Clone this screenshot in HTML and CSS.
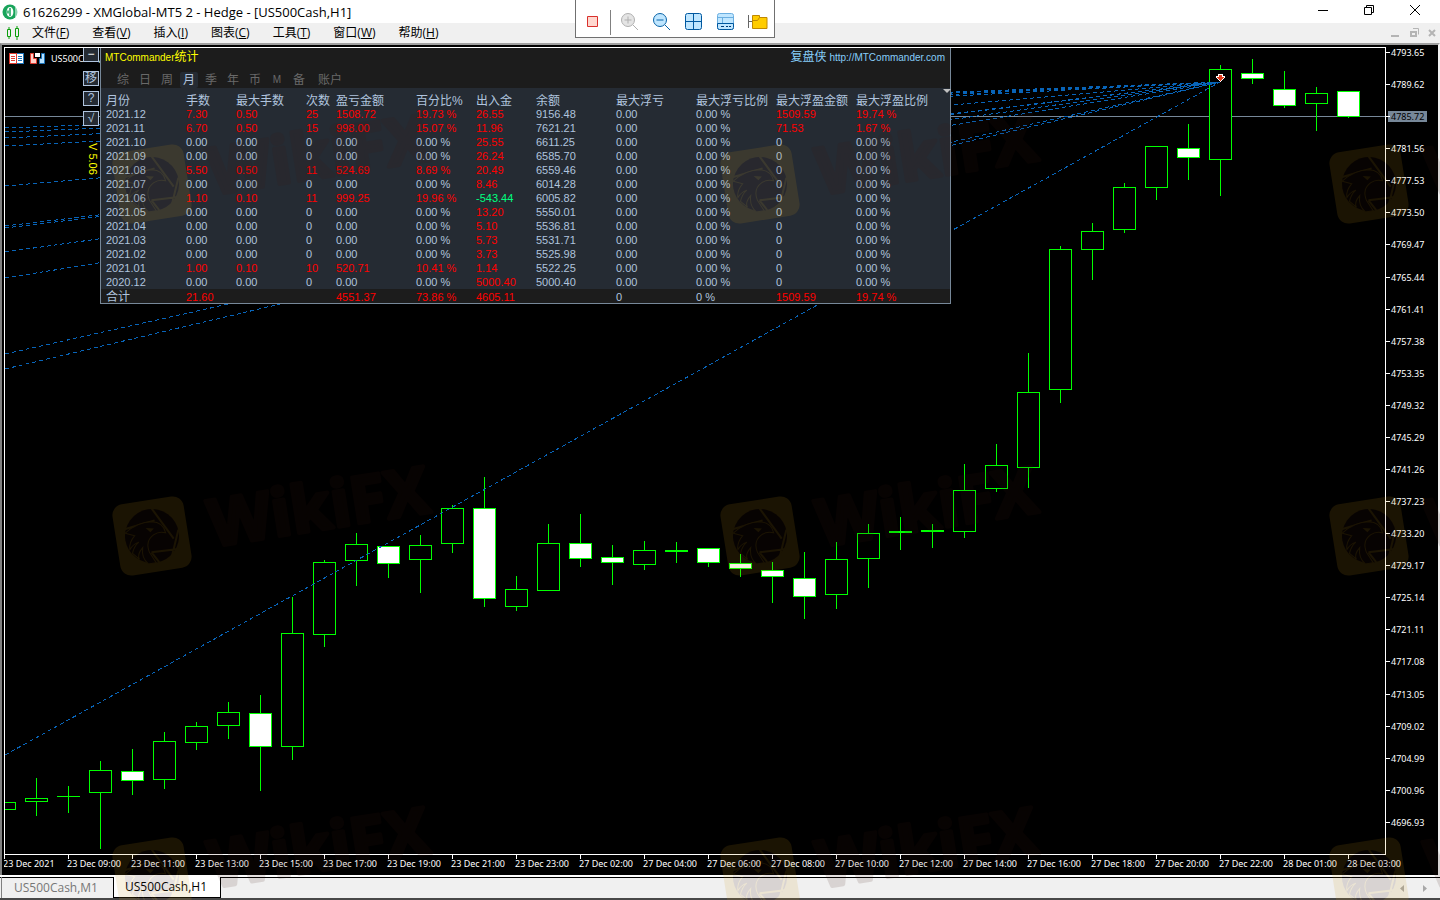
FILE: index.html
```html
<!DOCTYPE html>
<html lang="zh-CN">
<head>
	<meta charset="utf-8">
	<title>61626299 - XMGlobal-MT5 2 - Hedge - [US500Cash,H1]</title>
	<link rel="stylesheet" href="styles.css">
</head>
<body>
	<header class="titlebar">
		<svg class="titlebar__logo" width="16" height="16" viewBox="0 0 16 16">
			<circle cx="8" cy="8" r="7.5" fill="#19a45b"/>
			<path d="M13 3h3v10h-3z" fill="#fff" opacity=".5"/>
			<ellipse cx="8" cy="8" rx="3.4" ry="5" fill="#fff"/>
			<path d="M8 4v8M6 6.500v3" stroke="#19a45b" stroke-width="1.500"/>
		</svg>
		<h1 class="titlebar__text">61626299 - XMGlobal-MT5 2 - Hedge - [US500Cash,H1]</h1>
		<div class="titlebar__controls">
			<button aria-label="Minimize"><svg width="12" height="12"><path d="M1 6.500h10" stroke="#000"/></svg></button>
			<button aria-label="Restore"><svg width="12" height="12"><path d="M1.500 3.500h7v7h-7zM3.500 3.500v-2h7v7h-2" fill="none" stroke="#000"/></svg></button>
			<button aria-label="Close"><svg width="12" height="12"><path d="M1 1l10 10M11 1L1 11" stroke="#000"/></svg></button>
		</div>
	</header>

	<nav class="menubar">
		<svg width="14" height="16" fill="none" stroke="#0a9e0a">
			<path d="M1.500 4.500h3v7h-3zM3 2v2M3 12v2M9.500 3.500h3v8h-3zM11 1v2M11 12v3"/>
		</svg>
		<button>文件(<u>F</u>)</button>
		<button>查看(<u>V</u>)</button>
		<button>插入(<u>I</u>)</button>
		<button>图表(<u>C</u>)</button>
		<button>工具(<u>T</u>)</button>
		<button>窗口(<u>W</u>)</button>
		<button>帮助(<u>H</u>)</button>
		<div class="menubar__controls">
			<svg width="48" height="12" fill="none" stroke="#b4b4b4" stroke-width="2">
				<path d="M1 9h8"/>
				<path d="M21 5h5v4h-5z"/><path d="M23 1.500h5.500v6" stroke-width="1"/>
				<path d="M39 3l6 6M45 3l-6 6"/>
			</svg>
		</div>
	</nav>

	<div class="toolbar">
		<button aria-label="Stop"><svg width="20" height="20"><path d="M4.500 4.500h10v10h-10z" fill="#ffd8d0" stroke="#d9302c"/></svg></button>
		<span class="toolbar__line"></span>
		<button aria-label="Zoom in" disabled>
			<svg width="20" height="20" fill="#e4e4e4" stroke="#b0b0b0"><circle cx="8" cy="8" r="6.500"/><path d="M8 4.500v7M4.500 8h7M13 13l5 5"/></svg>
		</button>
		<button aria-label="Zoom out">
			<svg width="20" height="20" fill="#bfe6ff" stroke="#0a64a8"><circle cx="8" cy="8" r="6.500"/><path d="M4.500 8h7M13 13l5 5"/></svg>
		</button>
		<button aria-label="Tile windows">
			<svg width="20" height="20" fill="#bfe6ff" stroke="#0058a0"><rect x="1.500" y="1.500" width="16" height="16" rx="2"/><path d="M9.500 1v17M1 9.500h17"/></svg>
		</button>
		<button aria-label="Layout">
			<svg width="20" height="20" fill="#bfe6ff" stroke="#6aaee0"><rect x="1.500" y="1.500" width="16" height="16" rx="2"/><path d="M1 5.500h16M6.500 6v5"/><path d="M1.500 11.500h16v4q0 2-2 2h-12q-2 0-2-2z" stroke="#0058a0"/><path d="M5 14.500h3M10 14.500h2M13 14.500h2" stroke="#003c78"/></svg>
		</button>
		<button aria-label="Folder">
			<svg width="20" height="20"><path d="M.5 3v13M1 9.500h3" stroke="#666"/><path d="M4.500 3.500h7v2h7.500v11h-14.500z" fill="#ffcc00" stroke="#c08800"/><path d="M4.500 8.500h5l2-3" fill="none" stroke="#c08800"/></svg>
		</button>
	</div>

	<main class="chart">
		<section class="plot">
			<svg class="plot__canvas" id="canvas"></svg>

			<div class="symbol">
				<svg width="15" height="11"><path d="M0 0h8v11H0z" fill="#e03c32"/><path d="M8 0h7v11H8z" fill="#1a72b8"/><path d="M1 1h6v9H1zM8 1h6v9H8z" fill="#fff"/><path d="M2 3.500h4M2 5.500h4M2 7.500h4" stroke="#e03c32"/><path d="M9 3.500h4M9 5.500h4M9 7.500h4" stroke="#1a72b8"/></svg>
				<svg width="15" height="11"><path d="M.5.5h3v5h3v5h-6z" fill="#ffd0c8" stroke="#e03c32"/><path d="M11.500.5h3v10h-5v-5h2z" fill="#b8e2ff" stroke="#1a72b8"/><path d="M5 0h5v4H5z" fill="#fff"/></svg>
				<span>US500Cash,H1</span>
			</div>

			<div class="tools">
				<button>−</button>
				<button>移</button>
				<button>?</button>
				<button>√</button>
				<span class="tools__version">V 5.06</span>
			</div>

			<div class="panel">
				<div class="panel__head">
					<div class="panel__title">
						<h2>MTCommander<b>统计</b></h2>
						<a href="http://MTCommander.com"><b>复盘侠</b> http://MTCommander.com</a>
					</div>
					<div class="panel__tabs">
						<button>综</button>
						<button>日</button>
						<button>周</button>
						<button class="is-active">月</button>
						<button>季</button>
						<button>年</button>
						<button>币</button>
						<button class="small">M</button>
						<button>备</button>
						<button class="wide">账户</button>
					</div>
				</div>
				<table class="stats">
					<colgroup>
						<col class="w80"><col class="w50"><col class="w70"><col class="w30"><col class="w80"><col class="w60">
						<col class="w60"><col class="w80"><col class="w80"><col class="w80"><col class="w80"><col>
					</colgroup>
					<thead>
						<tr><th>月份</th><th>手数</th><th>最大手数</th><th>次数</th><th>盈亏金额</th><th>百分比%</th><th>出入金</th><th>余额</th><th>最大浮亏</th><th>最大浮亏比例</th><th>最大浮盈金额</th><th>最大浮盈比例</th></tr>
					</thead>
					<tbody>
						<tr><td>2021.12</td><td class="up">7.30</td><td class="up">0.50</td><td class="up">25</td><td class="up">1508.72</td><td class="up">19.73 %</td><td class="up">26.55</td><td>9156.48</td><td>0.00</td><td>0.00 %</td><td class="up">1509.59</td><td class="up">19.74 %</td></tr>
						<tr><td>2021.11</td><td class="up">6.70</td><td class="up">0.50</td><td class="up">15</td><td class="up">998.00</td><td class="up">15.07 %</td><td class="up">11.96</td><td>7621.21</td><td>0.00</td><td>0.00 %</td><td class="up">71.53</td><td class="up">1.67 %</td></tr>
						<tr><td>2021.10</td><td>0.00</td><td>0.00</td><td>0</td><td>0.00</td><td>0.00 %</td><td class="up">25.55</td><td>6611.25</td><td>0.00</td><td>0.00 %</td><td>0</td><td>0.00 %</td></tr>
						<tr><td>2021.09</td><td>0.00</td><td>0.00</td><td>0</td><td>0.00</td><td>0.00 %</td><td class="up">26.24</td><td>6585.70</td><td>0.00</td><td>0.00 %</td><td>0</td><td>0.00 %</td></tr>
						<tr><td>2021.08</td><td class="up">5.50</td><td class="up">0.50</td><td class="up">11</td><td class="up">524.69</td><td class="up">8.69 %</td><td class="up">20.49</td><td>6559.46</td><td>0.00</td><td>0.00 %</td><td>0</td><td>0.00 %</td></tr>
						<tr><td>2021.07</td><td>0.00</td><td>0.00</td><td>0</td><td>0.00</td><td>0.00 %</td><td class="up">8.46</td><td>6014.28</td><td>0.00</td><td>0.00 %</td><td>0</td><td>0.00 %</td></tr>
						<tr><td>2021.06</td><td class="up">1.10</td><td class="up">0.10</td><td class="up">11</td><td class="up">999.25</td><td class="up">19.96 %</td><td class="down">-543.44</td><td>6005.82</td><td>0.00</td><td>0.00 %</td><td>0</td><td>0.00 %</td></tr>
						<tr><td>2021.05</td><td>0.00</td><td>0.00</td><td>0</td><td>0.00</td><td>0.00 %</td><td class="up">13.20</td><td>5550.01</td><td>0.00</td><td>0.00 %</td><td>0</td><td>0.00 %</td></tr>
						<tr><td>2021.04</td><td>0.00</td><td>0.00</td><td>0</td><td>0.00</td><td>0.00 %</td><td class="up">5.10</td><td>5536.81</td><td>0.00</td><td>0.00 %</td><td>0</td><td>0.00 %</td></tr>
						<tr><td>2021.03</td><td>0.00</td><td>0.00</td><td>0</td><td>0.00</td><td>0.00 %</td><td class="up">5.73</td><td>5531.71</td><td>0.00</td><td>0.00 %</td><td>0</td><td>0.00 %</td></tr>
						<tr><td>2021.02</td><td>0.00</td><td>0.00</td><td>0</td><td>0.00</td><td>0.00 %</td><td class="up">3.73</td><td>5525.98</td><td>0.00</td><td>0.00 %</td><td>0</td><td>0.00 %</td></tr>
						<tr><td>2021.01</td><td class="up">1.00</td><td class="up">0.10</td><td class="up">10</td><td class="up">520.71</td><td class="up">10.41 %</td><td class="up">1.14</td><td>5522.25</td><td>0.00</td><td>0.00 %</td><td>0</td><td>0.00 %</td></tr>
						<tr><td>2020.12</td><td>0.00</td><td>0.00</td><td>0</td><td>0.00</td><td>0.00 %</td><td class="up">5000.40</td><td>5000.40</td><td>0.00</td><td>0.00 %</td><td>0</td><td>0.00 %</td></tr>
					</tbody>
					<tfoot>
						<tr><th>合计</th><td class="up">21.60</td><td></td><td></td><td class="up">4551.37</td><td class="up">73.86 %</td><td class="up">4605.11</td><td></td><td>0</td><td>0 %</td><td class="up">1509.59</td><td class="up">19.74 %</td></tr>
					</tfoot>
				</table>
			</div>
			<svg class="plot__shift" width="8" height="4"><path d="M0 0h8L4 4z" fill="#c0c0c0"/></svg>
		</section>
		<div class="prices" id="prices"></div>
		<div class="times" id="times"></div>
	</main>

	<footer class="tabs">
		<button>US500Cash,M1</button>
		<button class="is-active">US500Cash,H1</button>
		<svg class="tabs__arrows" width="28" height="8" fill="#a8a8a8"><path d="M4 0v7L0 3.500zM23 0v7l4-3.500z"/></svg>
	</footer>

	<svg class="watermark">
		<defs>
			<g id="mark">
				<rect x="-36" y="-36" width="72" height="72" rx="11" fill="#d09818"/>
				<circle r="27" fill="#3c1810"/>
				<g fill="none" stroke="#d09818" stroke-width="2">
					<path d="M-26-11L5-15M4-27L21 6M27-2L17 22M24 17L-3 16M-3 16L3 27"/>
				</g>
				<path d="M-26-7Q-12-16 2-14Q13-12 14-1Q8-4 2-1Q-8 4-5 16L0 27H-8Q-14 20-11 10Q-18 16-16 21L-22 14Q-19 7-14 4Q-20 5-24 10Q-24 3-17-3Z" fill="#3c1810" stroke="#d09818"/>
				<path d="M-5-9l8 2-4 3z" fill="#d09818"/>
				<text x="58" y="20">WikiFX</text>
			</g>
		</defs>
		<g id="marks"></g>
	</svg>

	<script src="script.js"></script>
</body>
</html>
```

FILE: styles.css
```css
* {
	box-sizing: border-box;
}

body {
	display: flex;
	flex-direction: column;
	position: relative;
	height: 100vh;
	margin: 0;
	overflow: hidden;
	background: #f0f0f0;
	color: #000;
	font: 12px/16px "Open Sans", "Noto Sans CJK SC", sans-serif;
}

button {
	margin: 0;
	padding: 0;
	border: none;
	background: none;
	color: inherit;
	font: inherit;
}

svg {
	display: block;
}

/* window frame */

.titlebar {
	display: flex;
	flex: none;
	align-items: center;
	height: 23px;
	padding: 0 19px 0 2px;
	background: #fff;
}

.titlebar__text {
	margin: 0 0 0 5px;
	font-size: 13px;
	font-weight: normal;
}

.titlebar__controls {
	display: flex;
	gap: 34px;
	margin-left: auto;
	padding-bottom: 3px;
}

.menubar {
	display: flex;
	flex: none;
	align-items: center;
	gap: 23px;
	height: 20px;
	padding: 0 3px 0 6px;
}

.menubar svg {
	margin-right: -11px;
}

.menubar__controls {
	margin-left: auto;
	padding-right: 10px;
}

.toolbar {
	display: flex;
	align-items: center;
	position: absolute;
	top: 0;
	left: 40%;
	gap: 12px;
	width: 200px;
	height: 38px;
	margin-left: -1px;
	padding: 7px 0 0 7px;
	border: 1px solid #707070;
	border-top: none;
	background: #fff;
}

.toolbar__line {
	width: 1px;
	height: 25px;
	margin: 0 -3px 0 -5px;
	background: #808080;
}

/* chart */

.chart {
	display: grid;
	flex: 1;
	grid-template-columns: 1fr 52px;
	grid-template-rows: 1fr 20px;
	min-height: 0;
	padding: 2px 0 0 2px;
	border: solid;
	border-width: 2px 2px 0;
	border-color: #a0a0a0 #f0f0f0 #fff #808080;
	background: #000;
	color: #fff;
	font: 9px/11px "Noto Sans", sans-serif;
}

.plot {
	position: relative;
	min-width: 0;
	border: 1px solid #fff;
}

.plot__canvas {
	position: absolute;
	width: 100%;
	height: 100%;
}

.candle {
	fill: #000;
	stroke: #0f0;
}

.candle--down {
	fill: #fff;
}

.trade {
	stroke: #0864b8;
	stroke-dasharray: 4 3;
}

.plot__shift {
	position: absolute;
	top: 41px;
	left: 938px;
}

.symbol {
	display: flex;
	gap: 6px;
	position: absolute;
	top: 5px;
	left: 4px;
	width: 91px;
	overflow: hidden;
}

.symbol svg {
	flex: none;
}

.prices {
	display: flex;
	flex-direction: column;
	justify-content: space-between;
	padding-bottom: 27px;
}

.prices span {
	display: flex;
	align-items: center;
}

.prices span::before {
	width: 4px;
	height: 1px;
	margin-right: 1px;
	background: #fff;
	content: "";
}

.prices .current {
	position: relative;
	width: 41px;
	background: linear-gradient(to right, #000 2px, #778899 2px);
	color: #000;
}

.times {
	display: flex;
	grid-column: 1 / 3;
	overflow: hidden;
}

.times span {
	flex: none;
	width: 64px;
	padding-top: 3px;
	background: linear-gradient(#fff, #fff) 0 0 / 1px 4px no-repeat;
	text-indent: -1px;
	white-space: nowrap;
}

/* statistics panel */

.tools {
	display: flex;
	flex-direction: column;
	gap: 5px;
	position: absolute;
	top: 0;
	left: 78px;
	z-index: 1;
	color: #b0c4de;
	font: 12px/13px "Liberation Sans", "Noto Sans CJK SC", sans-serif;
}

.tools button {
	width: 16px;
	height: 15px;
	border: 1px solid #b0c4de;
	background: #252b33;
}

.tools button:first-child {
	height: 14px;
	margin-bottom: 4px;
	border-top: none;
	color: #fff;
}

.tools__version {
	align-self: center;
	margin: 12px 0 0 3px;
	color: #ff0;
	font-size: 11px;
	writing-mode: vertical-rl;
}

.panel {
	position: absolute;
	top: 0;
	left: 95px;
	width: 851px;
	border: 1px solid #778899;
	border-top: none;
	background: #252b33;
	color: #b0c4de;
	font: 11px/14px "Liberation Sans", "Noto Sans CJK SC", sans-serif;
}

.panel__head {
	height: 40px;
	background: #1c1c1c;
}

.panel__title {
	display: flex;
	justify-content: space-between;
	padding: 1px 5px 6px 4px;
}

.panel__title h2 {
	margin: 0;
	color: #ff0;
	font-size: 10px;
	font-weight: normal;
	line-height: 16px;
}

.panel__title a {
	color: #87cefa;
	font-size: 10px;
	line-height: 16px;
	text-decoration: none;
}

.panel__title b {
	font-size: 12px;
	font-weight: normal;
}

.panel__tabs {
	display: flex;
	padding-left: 13px;
	color: #696969;
	font-size: 12px;
}

.panel__tabs button {
	width: 18px;
	height: 16px;
	margin-right: 4px;
	border-radius: 2px;
}

.panel__tabs .is-active {
	background: #252b33;
	color: #b0c4de;
}

.panel__tabs .small {
	font-size: 10px;
}

.panel__tabs .wide {
	width: 36px;
}

.stats {
	width: 100%;
	border-collapse: collapse;
	table-layout: fixed;
}

.stats th,
.stats td {
	height: 14px;
	padding: 0 0 0 5px;
	line-height: 14px;
	text-align: left;
	white-space: nowrap;
}

.stats th {
	font-size: 12px;
	font-weight: normal;
}

.stats thead th {
	height: 19px;
	padding-top: 7px;
	line-height: 12px;
}

.stats tfoot {
	background: #1c1c1c;
}

.stats tfoot th,
.stats tfoot td {
	padding-top: 2px;
	line-height: 12px;
}

.up {
	color: #f00;
}

.down {
	color: #00ff7f;
}

.w30 { width: 30px; }
.w50 { width: 50px; }
.w60 { width: 60px; }
.w70 { width: 70px; }
.w80 { width: 80px; }

/* chart tabs */

.tabs {
	display: flex;
	flex: none;
	align-items: stretch;
	height: 25px;
	padding-left: 1px;
	border-top: 2px solid #fff;
	border-bottom: 2px solid #484848;
	background: linear-gradient(#000, #000) 0 0 / 100% 1px no-repeat;
}

.tabs button {
	padding: 0 15px 0 12px;
	border-left: 1px solid #808080;
	color: #777;
}

.tabs .is-active {
	padding: 0 13px 0 11px;
	border: 1px solid #000;
	border-top: none;
	background: #fff;
	color: #000;
}

.tabs__arrows {
	margin: 8px 12px 0 auto;
}

.watermark {
	position: absolute;
	width: 100%;
	height: 100%;
	pointer-events: none;
}

.watermark text {
	fill: #3c1810;
	stroke: #3c1810;
	stroke-width: 4px;
	stroke-linejoin: round;
	font: bold 65px "Open Sans", sans-serif;
}
```

FILE: script.js
```js
const SVG = "http://www.w3.org/2000/svg";
const STEP = 32;

// high, body top, body bottom, low, is a falling bar
const candles = [
	[802, 802, 809, 809], [778, 798, 801, 816], [786, 796, 796, 813],
	[761, 770, 792, 849], [749, 771, 780, 795, 1], [732, 741, 779, 789],
	[722, 726, 742, 750], [702, 712, 725, 739], [695, 713, 746, 791, 1],
	[597, 633, 746, 760], [560, 562, 634, 647], [533, 544, 560, 586],
	[546, 546, 563, 578, 1], [535, 545, 559, 593], [505, 508, 543, 553],
	[477, 508, 598, 607, 1], [576, 589, 606, 611], [524, 543, 590, 591],
	[514, 543, 558, 567, 1], [545, 557, 562, 585, 1], [541, 550, 564, 570],
	[542, 550, 551, 563], [548, 548, 562, 567, 1], [554, 563, 568, 577, 1],
	[562, 570, 576, 603, 1], [552, 578, 596, 619, 1], [542, 559, 594, 609],
	[524, 533, 558, 588], [517, 531, 532, 550], [524, 530, 531, 548],
	[464, 490, 531, 538], [444, 465, 488, 492], [353, 392, 467, 488],
	[246, 249, 389, 403], [223, 231, 249, 280], [183, 187, 229, 233],
	[146, 146, 187, 200], [124, 148, 157, 180, 1], [65, 69, 159, 196],
	[59, 73, 78, 84, 1], [71, 89, 105, 108, 1], [87, 93, 103, 131],
	[91, 91, 116, 118, 1]
];

// where each closed trade line leaves the left edge
const trades = [128, 132, 138, 146, 186, 226, 228, 252, 278, 354, 369, 755];

const times = [
	"23 Dec 2021", "23 Dec 09:00", "23 Dec 11:00", "23 Dec 13:00", "23 Dec 15:00",
	"23 Dec 17:00", "23 Dec 19:00", "23 Dec 21:00", "23 Dec 23:00", "27 Dec 02:00",
	"27 Dec 04:00", "27 Dec 06:00", "27 Dec 08:00", "27 Dec 10:00", "27 Dec 12:00",
	"27 Dec 14:00", "27 Dec 16:00", "27 Dec 18:00", "27 Dec 20:00", "27 Dec 22:00",
	"28 Dec 01:00", "28 Dec 03:00"
];

function draw(parent, name, attrs) {
	let el = document.createElementNS(SVG, name);
	for (let key in attrs) {
		el.setAttribute(key, attrs[key]);
	}
	parent.appendChild(el);
	return el;
}

function label(parent, text, className) {
	let el = document.createElement("span");
	el.textContent = text;
	if (className) {
		el.className = className;
	}
	parent.appendChild(el);
}

let canvas = draw(document.getElementById("canvas"), "g", {
	transform: "translate(-5 -48)",
	"shape-rendering": "crispEdges"
});

draw(canvas, "path", { d: "M5 116.5H4000", stroke: "#778899" });

candles.forEach(([high, top, bottom, low, down], i) => {
	let x = 4 + i * STEP;
	let bar = draw(canvas, "g", { class: down ? "candle candle--down" : "candle" });
	draw(bar, "path", { d: `M${x + .5} ${high}V${low}` });
	if (bottom - top < 2) {
		draw(bar, "path", { d: `M${x - 11} ${(top + bottom + 1) / 2}h23`, "stroke-width": bottom - top + 1 });
	} else {
		draw(bar, "rect", { x: x - 10.5, y: top + .5, width: 22, height: bottom - top });
	}
});

trades.forEach(y => draw(canvas, "line", { class: "trade", x1: 5, y1: y, x2: 1220, y2: 82 }));

draw(canvas, "path", {
	d: "M1218.5 74.5h4v2h2v1l-4 4l-4-4v-1h2z",
	fill: "#e03c1e",
	stroke: "#fff"
});

let prices = document.getElementById("prices");
for (let i = 0; i < 25; i++) {
	if (i === 2) {
		label(prices, "4785.72", "current");
	} else {
		label(prices, (4793.65 - i * 4.03).toFixed(2));
	}
}

times.forEach(time => label(document.getElementById("times"), time));

let marks = document.getElementById("marks");
[184, 536, 877].forEach(y => {
	[152, 760, 1369].forEach(x => {
		draw(marks, "use", { href: "#mark", transform: `translate(${x} ${y}) rotate(-9)`, opacity: .13 });
	});
});
```
